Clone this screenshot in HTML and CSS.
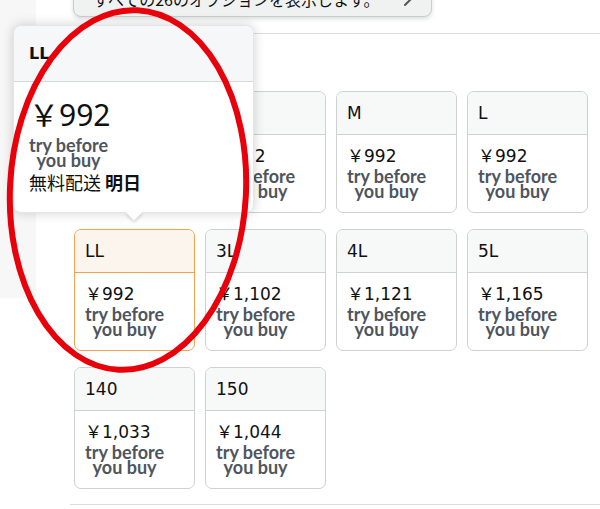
FILE: index.html
```html
<!DOCTYPE html>
<html lang="ja">
<head>
<meta charset="utf-8">
<link rel="stylesheet" href="styles.css">
</head>
<body>
<div class="page">
  <aside class="side"></aside>
  <main class="main">
    <button class="all-options">
      <span>すべての26のオプションを表示します。</span>
      <svg class="chev" width="10" height="16" viewBox="0 0 10 16"><path d="M2 2 L8 8 L2 14" fill="none" stroke="#555" stroke-width="2" stroke-linecap="round" stroke-linejoin="round"/></svg>
    </button>
    <div class="rule"></div>
    <div class="grid">
      <div class="card"><div class="card-head">SS</div><div class="card-body"><div class="price">￥992</div><div class="trial">try before<br>you buy</div></div></div>
      <div class="card"><div class="card-head">S</div><div class="card-body"><div class="price">￥992</div><div class="trial">try before<br>you buy</div></div></div>
      <div class="card"><div class="card-head">M</div><div class="card-body"><div class="price">￥992</div><div class="trial">try before<br>you buy</div></div></div>
      <div class="card"><div class="card-head">L</div><div class="card-body"><div class="price">￥992</div><div class="trial">try before<br>you buy</div></div></div>
      <div class="card selected"><div class="card-head">LL</div><div class="card-body"><div class="price">￥992</div><div class="trial">try before<br>you buy</div></div></div>
      <div class="card"><div class="card-head">3L</div><div class="card-body"><div class="price">￥1,102</div><div class="trial">try before<br>you buy</div></div></div>
      <div class="card"><div class="card-head">4L</div><div class="card-body"><div class="price">￥1,121</div><div class="trial">try before<br>you buy</div></div></div>
      <div class="card"><div class="card-head">5L</div><div class="card-body"><div class="price">￥1,165</div><div class="trial">try before<br>you buy</div></div></div>
      <div class="card"><div class="card-head">140</div><div class="card-body"><div class="price">￥1,033</div><div class="trial">try before<br>you buy</div></div></div>
      <div class="card"><div class="card-head">150</div><div class="card-body"><div class="price">￥1,044</div><div class="trial">try before<br>you buy</div></div></div>
    </div>
    <div class="rule rule-bottom"></div>
  </main>

  <div class="popover">
    <div class="pop-head">LL</div>
    <div class="pop-body">
      <div class="pop-price">￥992</div>
      <div class="trial pop-trial">try before<br>you buy</div>
      <div class="pop-ship">無料配送 <b>明日</b></div>
    </div>
  </div>

  <svg class="annotation" width="600" height="509" viewBox="0 0 600 509">
    <ellipse cx="128" cy="190" rx="118" ry="180" transform="rotate(3 128 190)" fill="none" stroke="#e8000b" stroke-width="6"/>
  </svg>
</div>
</body>
</html>
```

FILE: styles.css
```css
body {
  margin: 0;
  background: #fff;
  color: #0f1111;
  font-family: "DejaVu Sans", "Noto Sans CJK JP", sans-serif;
}

.page {
  position: relative;
  display: flex;
  width: 600px;
  height: 509px;
  overflow: hidden;
}

.side {
  flex: none;
  width: 36px;
  height: 298px;
  background: #f7f7f7;
}

.main {
  flex: 1;
  padding-left: 34px;
}

.all-options {
  display: flex;
  align-items: center;
  justify-content: space-between;
  box-sizing: border-box;
  width: 359px;
  height: 37px;
  margin: -20px 0 0 3px;
  padding: 0 18px 0 19px;
  background: #f0f2f2;
  border: 1px solid #c9cdcd;
  border-radius: 8px;
  box-shadow: 0 2px 4px rgba(180, 185, 185, 0.45);
  color: #0f1111;
  font: 16px "Noto Sans CJK JP", sans-serif;
}

.chev {
  display: block;
}

.rule {
  height: 1px;
  margin-top: 16px;
  background: #dcdcdc;
}

.rule-bottom {
  margin-top: 15px;
}

.grid {
  display: grid;
  grid-template-columns: repeat(4, 121px);
  column-gap: 10px;
  row-gap: 16px;
  margin: 57px 0 0 4px;
}

.card {
  box-sizing: border-box;
  height: 122px;
  border: 1px solid #cdd1d1;
  border-radius: 7px;
  overflow: hidden;
  background: #fff;
}

.card-head {
  display: flex;
  align-items: center;
  height: 42px;
  padding-left: 10px;
  border-bottom: 1px solid #cdd1d1;
  background: #f7f8f8;
  font-size: 17px;
}

.card.selected {
  border-color: #f2a352;
}

.card.selected .card-head {
  background: #fcf5ee;
  border-bottom-color: #f2a352;
}

.card-body {
  padding: 11px 0 0 10px;
}

.price {
  font-size: 17px;
  line-height: 20px;
}

.trial {
  display: inline-block;
  margin-top: 3px;
  text-align: center;
  color: #4e555d;
  font: 700 18px/15px "Lato", sans-serif;
}

.popover {
  position: absolute;
  left: 13px;
  top: 25px;
  box-sizing: border-box;
  width: 241px;
  height: 188px;
  background: #fff;
  border: 1px solid #e3e6e6;
  border-radius: 8px;
  box-shadow: 0 0 12px rgba(0, 0, 0, 0.18);
}

.popover::after {
  content: "";
  position: absolute;
  left: 114px;
  top: 180px;
  width: 12px;
  height: 12px;
  background: #fff;
  transform: rotate(45deg);
  box-shadow: 2px 2px 3px rgba(0, 0, 0, 0.12);
}

.pop-head {
  display: flex;
  align-items: center;
  height: 55px;
  padding-left: 15px;
  background: #f5f7f8;
  border-bottom: 1px solid #d5d9d9;
  border-radius: 8px 8px 0 0;
  font-weight: 700;
  font-size: 16px;
}

.pop-body {
  padding: 15px 15px 0;
}

.pop-price {
  font: 30px/36px "Noto Sans", "Noto Sans CJK JP", sans-serif;
}

.pop-trial {
  margin-top: 5px;
}

.pop-ship {
  margin-top: 0;
  font: 18px/22px "Noto Sans CJK JP", sans-serif;
}

.pop-ship b {
  font-weight: 700;
}

.annotation {
  position: absolute;
  left: 0;
  top: 0;
  pointer-events: none;
}
```
